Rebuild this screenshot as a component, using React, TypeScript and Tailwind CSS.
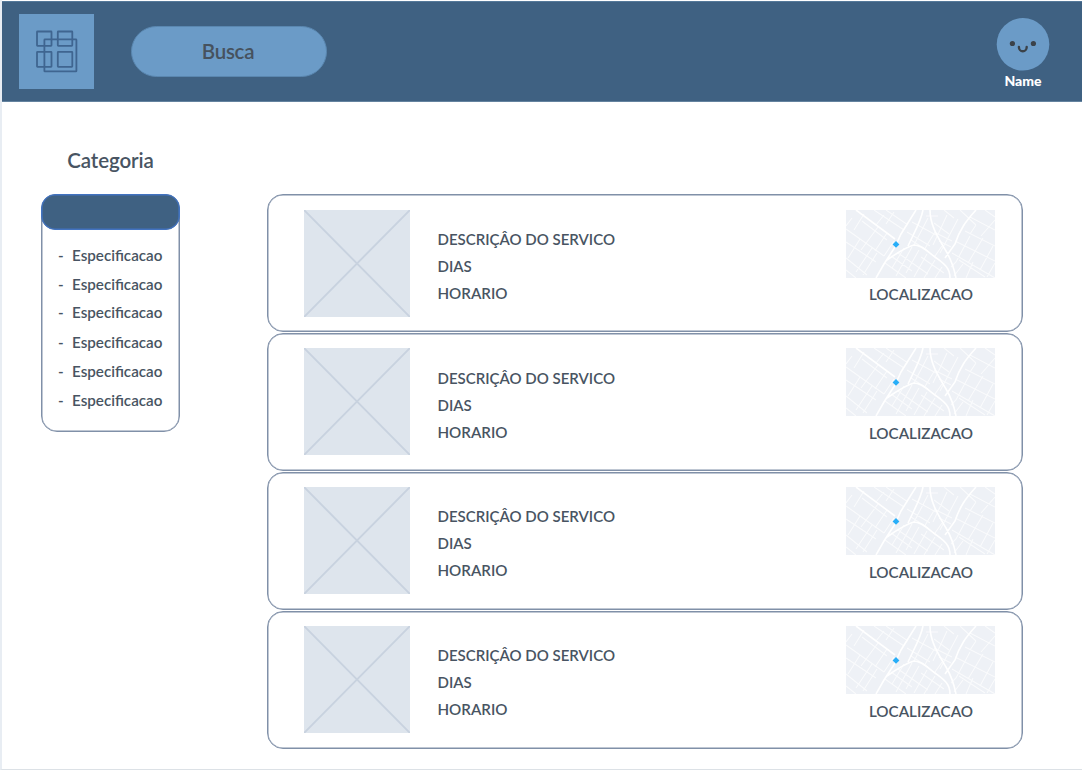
const specs = [0, 1, 2, 3, 4, 5];
const services = [0, 1, 2, 3];

function Logo() {
  return (
    <div className="h-[75px] w-[75px] bg-[#6b9bc7]">
      <svg viewBox="0 0 75 75" className="h-full w-full" fill="none" stroke="#3f6590" strokeWidth="1.8">
        <rect x="18" y="17.5" width="14.5" height="14.3" rx="0.5" />
        <rect x="38.8" y="17.5" width="14.5" height="14.3" rx="0.5" />
        <rect x="18" y="37.8" width="14.5" height="15" rx="0.5" />
        <rect x="38.8" y="37.8" width="14.5" height="15" rx="0.5" />
        <rect x="25.4" y="25.4" width="32" height="32" rx="0.5" />
      </svg>
    </div>
  );
}

function Avatar() {
  return (
    <svg viewBox="0 0 54 54" className="block h-[54px] w-[54px]">
      <circle cx="27" cy="27.3" r="26.3" fill="#6b9bc7" />
      <circle cx="16.4" cy="26.5" r="2.6" fill="#3b4249" />
      <circle cx="37.4" cy="26.5" r="2.6" fill="#3b4249" />
      <path d="M22.9 29.9a3.9 4.4 0 0 0 7.8 0" fill="none" stroke="#3b4249" strokeWidth="2.4" strokeLinecap="round" />
    </svg>
  );
}

function Placeholder() {
  return (
    <svg viewBox="0 0 106 107" className="block h-[107px] w-[106px]">
      <rect width="106" height="107" fill="#dee5ed" />
      <path d="M0 0 106 107M106 0 0 107" stroke="#c8d2df" strokeWidth="1.9" />
    </svg>
  );
}

function MapThumb() {
  return (
    <svg viewBox="0 0 149 68" className="block h-[68px] w-[149px]" fill="none" stroke="#fff">
      <rect width="149" height="68" fill="#eef1f6" stroke="none" />
      <g strokeWidth="1.1" opacity="0.7">
        <path d="M0 19 31 41 38 46M0 32 30 52M0 48 21 65M16 11 41 30M0 60 10 68M28 0 58 20M40 0 62 15M18 4 8 20M32 17 15 40M41 23 29 41M26 38 10 62M31 43 17 65M38 5 30 15M48 2 40 14M14 29 2 48M6 8 0 16M48 31 38 46" />
        <path d="M45 46 66 61M39 53 60 68M58 38 46 58M66 37 50 66M73 40 60 63M81 44 68 67M89 50 78 68M96 57 89 68M52 43 82 64M75 47 98 63" />
        <path d="M66 12 90 25M61 22 84 36M65 30 82 41M82 8 68 35M89 22 78 40M96 36 89 46M80 6H92M88 13 103 24M90 23 106 31M93 31 105 37M101 5 87 35M112 9 94 43" />
        <path d="M114 0 130 15M139 0 149 7M119 21 149 36M109 31 149 51M113 50 139 67M106 43 149 68M124 7 149 20M149 10 135 26M137 28 122 53M147 36 134 60M124 26 110 52 105 57M149 53 141 67M127 52 120 68M117 54 108 66M98 0 108 8M130 15 124 24" />
      </g>
      <path d="M10 0 49 29M77 0C75 11 68 23 62 36M70 0 55 24 49 37M49 37 38 54 30 68M41 50C51 43 60 37 68 35C76 35 82 42 89 47C97 53 104 57 104 68M84 0C84 16 93 29 100 41C106 51 108 58 110 68M130 0C120 11 114 19 109 34L99 48" strokeWidth="1.6" />
      <path d="m50 31 3.4 3.4L50 37.8l-3.4-3.4z" fill="#28aef8" stroke="none" />
    </svg>
  );
}

function ServiceCard() {
  return (
    <article className="flex h-[138px] shrink-0 rounded-[16px] border border-[#8090a8] pl-[36px] pt-[14.2px] text-[15px] font-semibold leading-[27px] shadow-[inset_0_0_0_0.5px_#8090a8]">
      <Placeholder />
      <div className="ml-[27.5px] mt-[16.3px] w-[408.5px]">
        <p>DESCRIÇÂO DO SERVICO</p>
        <p>DIAS</p>
        <p className="text-[15.15px]">HORARIO</p>
      </div>
      <div className="flex flex-col items-center">
        <MapThumb />
        <p className="mt-[3.85px] pl-px text-[15.2px]">LOCALIZACAO</p>
      </div>
    </article>
  );
}

export default function App() {
  return (
    <div className="h-[770px] w-[1082px] overflow-hidden border-b border-l-2 border-b-[#dce1e6] border-l-[#e8edf3] bg-white font-['Lato',sans-serif] text-[#485462]">
      <header className="mt-px flex h-[101px] items-start border-y border-b-[#64839f] border-t-[#55799a] bg-[#3f6182] pl-[17px] pr-[32px] pt-3">
        <Logo />
        <div className="ml-[37px] mt-[12px] flex h-[51px] w-[196px] items-center justify-center rounded-full border border-[#5a87b0] bg-[#6b9bc7] pr-[2px] text-[20.5px] font-semibold tracking-[-0.3px] text-[#46525e]">Busca</div>
        <div className="ml-auto mt-[3px] flex flex-col items-center">
          <Avatar />
          <span className="mt-[1px] text-[14px] font-black leading-[18px] text-white">Name</span>
        </div>
      </header>
      <main className="flex items-start pl-[39px]">
        <aside className="w-[139px] pt-[43px]">
          <h2 className="text-center text-[20.5px] font-semibold leading-[30px] tracking-[-0.1px]">Categoria</h2>
          <section className="mt-[19px] h-[238px] rounded-[16px] border border-[#8090a8] shadow-[inset_0_0_0_0.5px_#8090a8]">
            <div className="-mx-px -mt-px h-[36px] rounded-[14px] border border-[#4273c0] bg-[#3f6182] shadow-[inset_0_0_0_0.6px_#4273c0]" />
            <ul className="mt-[11px] pl-[16px] text-[15.2px] font-semibold leading-[29px]">
              {specs.map((i) => (
                <li key={i} className="flex nth-3:-mt-px nth-3:mb-px"><span className="w-[14px]">-</span>Especificacao</li>
              ))}
            </ul>
          </section>
        </aside>
        <section className="ml-[87px] mt-[92.4px] flex w-[756px] flex-col gap-[0.75px]">
          {services.map((i) => <ServiceCard key={i} />)}
        </section>
      </main>
    </div>
  );
}
